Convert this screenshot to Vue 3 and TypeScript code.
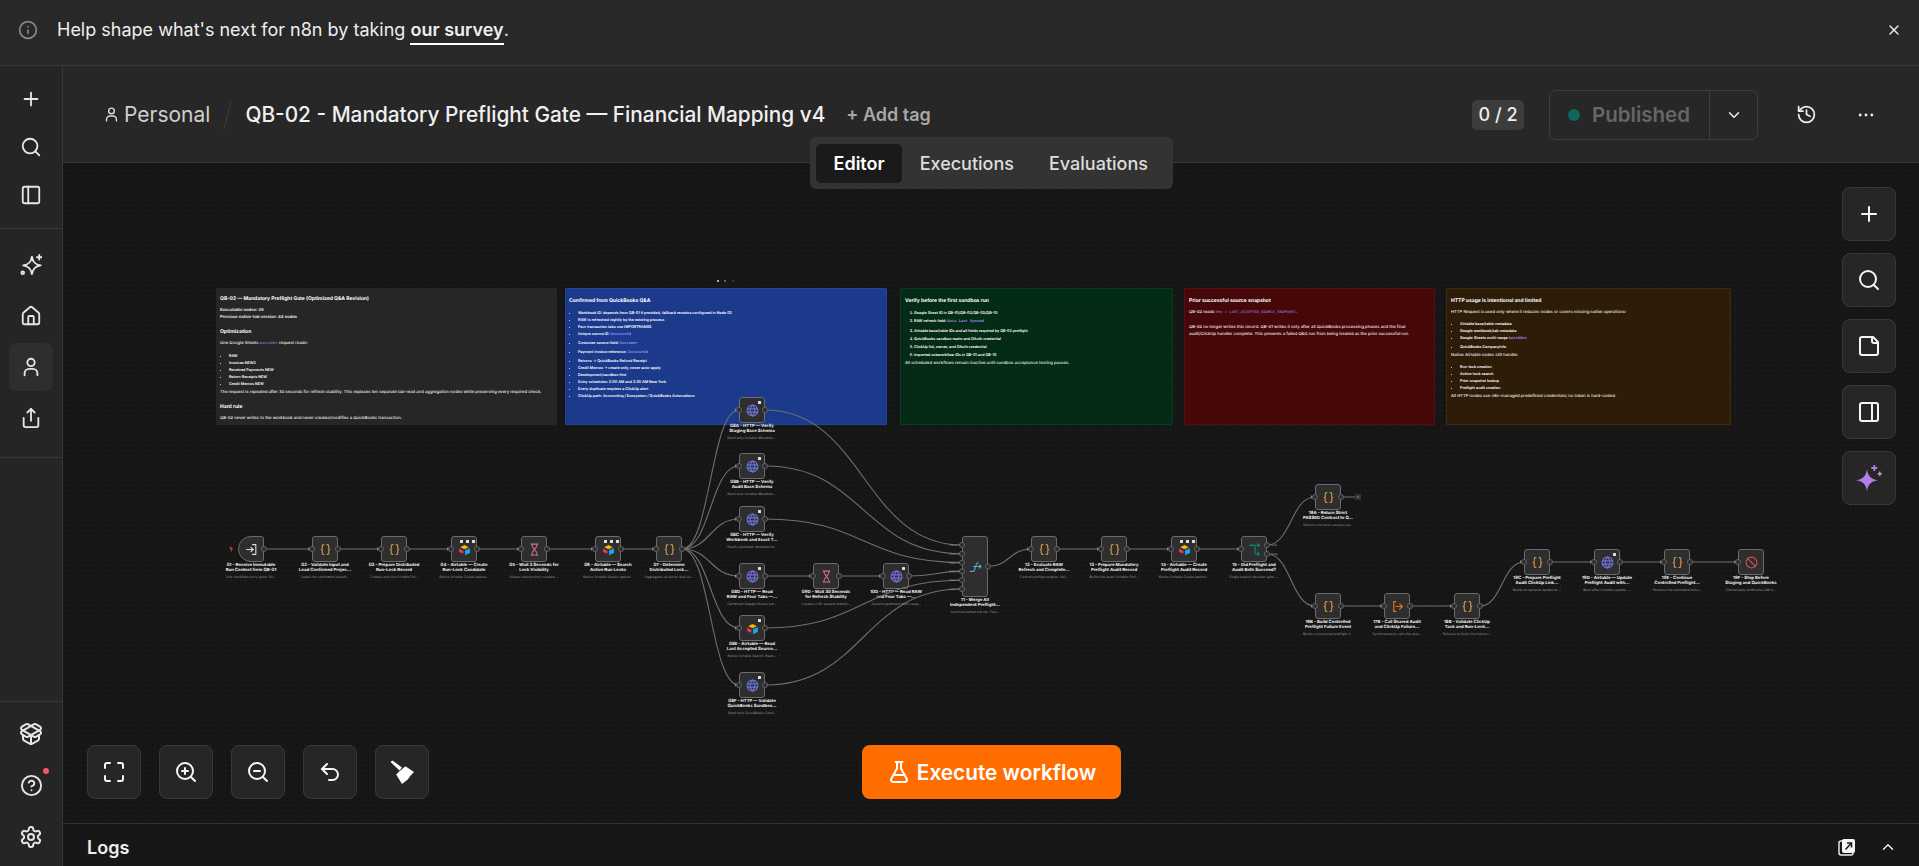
<template>
  <div class="app">
    <div class="banner">
      <Icon name="info" :size="20" class="banner-icon" />
      <span class="banner-text">Help shape what's next for n8n by taking <a class="survey">our survey</a>.</span>
      <Icon name="close" :size="16" class="banner-close" />
    </div>

    <div class="shell">
      <aside class="sidebar">
        <div class="side-group first">
          <button v-for="n in ['plus', 'search', 'panelLeft']" :key="n" class="side-btn"><Icon :name="n" :size="22" /></button>
        </div>
        <div class="side-group second">
          <button
            v-for="n in ['sparkles', 'house', 'user', 'share']"
            :key="n"
            class="side-btn"
            :class="{ active: n === 'user' }"
          >
            <Icon :name="n" :size="22" />
          </button>
        </div>
        <div class="side-spacer"></div>
        <div class="side-group third">
          <button class="side-btn"><Icon name="box" :size="24" /></button>
          <button class="side-btn help"><Icon name="help" :size="23" /><i class="red-dot"></i></button>
          <button class="side-btn"><Icon name="gear" :size="24" /></button>
        </div>
      </aside>

      <main class="main">
        <header class="header">
          <div class="crumb">
            <Icon name="user" :size="17" />
            <span class="crumb-name">Personal</span>
            <span class="slash"></span>
            <span class="wf-title">QB-02 - Mandatory Preflight Gate — Financial Mapping v4</span>
            <span class="add-tag">+ Add tag</span>
          </div>
          <div class="actions">
            <span class="counter">0 / 2</span>
            <div class="publish">
              <div class="publish-main"><i class="pub-dot"></i>Published</div>
              <div class="publish-caret"><Icon name="chevronDown" :size="18" /></div>
            </div>
            <Icon name="history" :size="21" class="history" />
            <Icon name="dots" :size="20" class="dots" />
          </div>
          <nav class="tabs">
            <span class="tab on">Editor</span>
            <span class="tab">Executions</span>
            <span class="tab">Evaluations</span>
          </nav>
        </header>

        <section class="canvas">
          <div class="note note-gray" :style="rect(216, 288, 341, 137)">
            <h4>QB-02 — Mandatory Preflight Gate (Optimized Q&amp;A Revision)</h4>
            <p class="strong">Executable nodes: 35<br />Previous native-tab version: 44 nodes</p>
            <h5>Optimization</h5>
            <p>One Google Sheets <code>batchGet</code> request reads:</p>
            <ul>
              <li>RAW</li>
              <li>Invoices NEW2</li>
              <li>Received Payments NEW</li>
              <li>Return Receipts NEW</li>
              <li>Credit Memos NEW</li>
            </ul>
            <p>The request is repeated after 30 seconds for refresh stability. This replaces ten separate tab-read and aggregation nodes while preserving every required check.</p>
            <h5>Hard rule</h5>
            <p>QB-02 never writes to the workbook and never creates/modifies a QuickBooks transaction.</p>
          </div>

          <div class="note note-blue" :style="rect(565, 288, 322, 137)">
            <h4>Confirmed from QuickBooks Q&amp;A</h4>
            <ul>
              <li>Workbook ID: depends from QB-01 if provided, fallback remains configured in Node 02</li>
              <li>RAW is refreshed nightly by the existing process</li>
              <li>Four transaction tabs use IMPORTRANGE</li>
              <li>Unique source ID: <code>InvoiceId</code></li>
              <li>Customer source field: <code>Customer</code></li>
              <li>Payment invoice reference: <code>InvoiceId</code></li>
              <li>Returns → QuickBooks Refund Receipt</li>
              <li>Credit Memos → create only, never auto-apply</li>
              <li>Development/sandbox first</li>
              <li>Entry schedules: 2:00 AM and 3:30 AM New York</li>
              <li>Every duplicate requires a ClickUp alert</li>
              <li>ClickUp path: Accounting / Ecosystem / QuickBooks Automations</li>
            </ul>
          </div>

          <div class="note note-green" :style="rect(900, 288, 273, 137)">
            <h4>Verify before the first sandbox run</h4>
            <ol>
              <li>Google Sheet ID in QB-01/QB-02/QB-03/QB-10</li>
              <li>RAW refresh field: <code>Data Last Synced</code></li>
              <li>Airtable base/table IDs and all fields required by QB-02 preflight</li>
              <li>QuickBooks sandbox realm and OAuth credential</li>
              <li>ClickUp list, owner, and OAuth credential</li>
              <li>Imported subworkflow IDs in QB-01 and QB-10</li>
            </ol>
            <p>All scheduled workflows remain inactive until sandbox acceptance testing passes.</p>
          </div>

          <div class="note note-red" :style="rect(1184, 288, 251, 137)">
            <h4>Prior successful source snapshot</h4>
            <p class="gap-b">QB-02 reads <code>Key = LAST_ACCEPTED_SOURCE_SNAPSHOT</code>.</p>
            <p>QB-02 no longer writes this record. QB-01 writes it only after all QuickBooks processing phases and the final audit/ClickUp handler complete. This prevents a failed Q&amp;O run from being treated as the prior successful run.</p>
          </div>

          <div class="note note-brown" :style="rect(1446, 288, 285, 137)">
            <h4>HTTP usage is intentional and limited</h4>
            <p>HTTP Request is used only where it reduces nodes or covers missing native operations:</p>
            <ul>
              <li>Airtable base/table metadata</li>
              <li>Google workbook/tab metadata</li>
              <li>Google Sheets multi-range <code>batchGet</code></li>
              <li>QuickBooks CompanyInfo</li>
            </ul>
            <p>Native Airtable nodes still handle:</p>
            <ul>
              <li>Run-lock creation</li>
              <li>Active-lock search</li>
              <li>Prior snapshot lookup</li>
              <li>Preflight audit creation</li>
            </ul>
            <p>All HTTP nodes use n8n-managed predefined credentials; no token is hard-coded.</p>
          </div>

          <div
            v-for="node in nodes"
            :key="node.id"
            class="node"
            :class="{ trigger: node.icon === 'trigger' }"
            :style="rect(node.x, node.y, node.w ?? 26, node.h ?? 26)"
          >
            <Icon :name="node.icon" :size="13" class="node-icon" :class="`ic-${node.icon}`" />
            <span v-if="node.badge" class="node-badge"></span>
            <span v-if="node.icon === 'airtable' && node.id !== '08E'" class="node-tools"><i></i><i></i><i></i></span>
            <span v-if="node.id === '08E'" class="node-badge"></span>
            <div class="node-label">
              <div class="node-title">{{ node.title[0] }}<br />{{ node.title[1] }}</div>
              <div class="node-desc">{{ node.desc }}</div>
            </div>
          </div>

          <svg class="edges" viewBox="63 163 1856 660" width="1856" height="660">
            <path v-for="(d, i) in edges" :key="i" :d="d" class="edge" />
            <path v-for="(p, i) in arrows" :key="`a${i}`" :d="`M${p[0] - 4} ${p[1] - 1.7}L${p[0] - 1.5} ${p[1]}L${p[0] - 4} ${p[1] + 1.7}Z`" class="arrow" />
            <circle v-for="(p, i) in ports" :key="`p${i}`" :cx="p[0]" :cy="p[1]" r="2.6" class="port" />
            <rect x="1355" y="494" width="6" height="6" rx="1" fill="#333" />
            <path d="M1357 497h2M1358 496v2" stroke="#999" stroke-width=".6" />
            <path d="M231 546.500l-1.200 2h2.400l-1.200 3" fill="none" stroke="#ea4b2a" stroke-width="1" />
            <circle cx="718" cy="281" r="1" fill="#ddd" />
            <circle cx="725" cy="281" r="1" fill="#777" />
            <circle cx="733" cy="281" r="1" fill="#444" />
            <text v-for="n in 6" :key="`in${n}`" :x="959" :y="545 + (n - 1) * 8.8 + 1" class="port-text" text-anchor="end">Input {{ n }}</text>
            <text x="1271" y="546" class="port-text">true</text>
            <text x="1271" y="555" class="port-text">false</text>
          </svg>

          <div class="tools left">
            <button v-for="n in ['maximize', 'zoomIn', 'zoomOut', 'undo', 'brush']" :key="n" class="tool"><Icon :name="n" :size="24" /></button>
          </div>
          <div class="tools right">
            <button class="tool"><Icon name="plus" :size="24" /></button>
            <button class="tool"><Icon name="search" :size="24" /></button>
            <button class="tool"><Icon name="note" :size="24" /></button>
            <button class="tool"><Icon name="panelRight" :size="24" /></button>
            <button class="tool">
              <svg width="30" height="30" viewBox="0 0 30 30">
                <path d="M13 6.300c1 6.600 3.600 9.700 11 11-7.400 1.300-10 4.400-11 11-1-6.600-3.600-9.700-11-11 7.400-1.300 10-4.400 11-11z" fill="#b07ee8" />
                <path d="M20.300 2v6M17.300 5h6" stroke="#b07ee8" stroke-width="1.800" />
                <path d="M25.700 8.500v4.400M23.500 10.700h4.400" stroke="#c58fc9" stroke-width="1.500" />
              </svg>
            </button>
          </div>
          <button class="execute"><Icon name="flask" :size="24" />Execute workflow</button>
        </section>

        <footer class="logs">
          <span class="logs-title">Logs</span>
          <div class="logs-actions">
            <svg width="20" height="20" viewBox="0 0 20 20">
              <rect x="2" y="4" width="14" height="14" rx="2" fill="none" stroke="#eee" stroke-width="1.400" />
              <rect x="5" y="2" width="13" height="14" rx="2" fill="#f5f5f5" />
              <path d="M8.500 12.500l5.500-6M10 6h4.500v4.500" stroke="#161616" stroke-width="1.500" fill="none" />
            </svg>
            <Icon name="chevronUp" :size="18" />
          </div>
        </footer>
      </main>
    </div>
  </div>
</template>

<script setup lang="ts">
import { h } from 'vue'

type FlowNode = {
  id: string
  x: number
  y: number
  w?: number
  h?: number
  icon: string
  title: [string, string]
  desc: string
  badge?: boolean
}

const originX = 63
const originY = 163

const strokeIcons: Record<string, string[]> = {
  info: ['M22 12a10 10 0 1 1-20 0a10 10 0 1 1 20 0', 'M12 16v-4', 'M12 8h.01'],
  close: ['M18 6 6 18', 'M6 6l12 12'],
  plus: ['M5 12h14', 'M12 5v14'],
  search: ['M19 11a8 8 0 1 1-16 0a8 8 0 1 1 16 0', 'M21 21l-4.300-4.300'],
  panelLeft: ['M5 3h14a2 2 0 0 1 2 2v14a2 2 0 0 1-2 2H5a2 2 0 0 1-2-2V5a2 2 0 0 1 2-2z', 'M9 3v18'],
  panelRight: ['M5 3h14a2 2 0 0 1 2 2v14a2 2 0 0 1-2 2H5a2 2 0 0 1-2-2V5a2 2 0 0 1 2-2z', 'M15 3v18'],
  sparkles: [
    'M13 3c1 6 3.500 8.500 9.500 9.500-6 1-8.500 3.500-9.500 9.500-1-6-3.500-8.500-9.500-9.500 6-1 8.500-3.500 9.500-9.500z',
    'M21 1v5',
    'M18.500 3.500h5',
    'M4.500 20.500a1.500 1.500 0 1 1-3 0a1.500 1.500 0 1 1 3 0'
  ],
  house: [
    'M15 21v-8a1 1 0 0 0-1-1h-4a1 1 0 0 0-1 1v8',
    'M3 10a2 2 0 0 1 .709-1.528l7-5.999a2 2 0 0 1 2.582 0l7 5.999A2 2 0 0 1 21 10v9a2 2 0 0 1-2 2H5a2 2 0 0 1-2-2z'
  ],
  user: ['M16 7a4 4 0 1 1-8 0a4 4 0 1 1 8 0', 'M5 21v-2a5 5 0 0 1 5-5h4a5 5 0 0 1 5 5v2'],
  share: ['M4 12v8a2 2 0 0 0 2 2h12a2 2 0 0 0 2-2v-8', 'M16 6l-4-4-4 4', 'M12 2v13'],
  box: [
    'M12 22v-9',
    'M15.170 2.210a1.670 1.670 0 0 1 1.630 0L21 4.570a1.930 1.930 0 0 1 0 3.360L8.820 14.790a1.655 1.655 0 0 1-1.640 0L3 12.430a1.930 1.930 0 0 1 0-3.360z',
    'M20 13v3.870a2.060 2.060 0 0 1-1.110 1.830l-6 3.080a1.930 1.930 0 0 1-1.780 0l-6-3.080A2.060 2.060 0 0 1 4 16.870V13',
    'M21 12.430a1.930 1.930 0 0 0 0-3.360L8.830 2.200a1.640 1.640 0 0 0-1.630 0L3 4.570a1.930 1.930 0 0 0 0 3.360l12.180 6.860a1.636 1.636 0 0 0 1.630 0z'
  ],
  help: ['M22 12a10 10 0 1 1-20 0a10 10 0 1 1 20 0', 'M9.090 9a3 3 0 0 1 5.830 1c0 2-3 3-3 3', 'M12 17h.01'],
  gear: [
    'M12.220 2h-.44a2 2 0 0 0-2 2v.18a2 2 0 0 1-1 1.730l-.43.25a2 2 0 0 1-2 0l-.15-.08a2 2 0 0 0-2.730.73l-.22.38a2 2 0 0 0 .73 2.730l.15.1a2 2 0 0 1 1 1.720v.51a2 2 0 0 1-1 1.740l-.15.09a2 2 0 0 0-.73 2.730l.22.38a2 2 0 0 0 2.730.73l.15-.08a2 2 0 0 1 2 0l.43.25a2 2 0 0 1 1 1.730V20a2 2 0 0 0 2 2h.44a2 2 0 0 0 2-2v-.18a2 2 0 0 1 1-1.730l.43-.25a2 2 0 0 1 2 0l.15.08a2 2 0 0 0 2.730-.73l.22-.39a2 2 0 0 0-.73-2.730l-.15-.08a2 2 0 0 1-1-1.740v-.5a2 2 0 0 1 1-1.740l.15-.09a2 2 0 0 0 .73-2.730l-.22-.38a2 2 0 0 0-2.730-.73l-.15.08a2 2 0 0 1-2 0l-.43-.25a2 2 0 0 1-1-1.730V4a2 2 0 0 0-2-2z',
    'M15 12a3 3 0 1 1-6 0a3 3 0 1 1 6 0'
  ],
  chevronDown: ['M6 9l6 6 6-6'],
  chevronUp: ['M6 15l6-6 6 6'],
  history: ['M3 12a9 9 0 1 0 9-9 9.750 9.750 0 0 0-6.740 2.740L3 8', 'M3 3v5h5', 'M12 7v5l4 2'],
  dots: ['M5 12h.01', 'M12 12h.01', 'M19 12h.01'],
  maximize: ['M8 3H5a2 2 0 0 0-2 2v3', 'M21 8V5a2 2 0 0 0-2-2h-3', 'M3 16v3a2 2 0 0 0 2 2h3', 'M16 21h3a2 2 0 0 0 2-2v-3'],
  zoomIn: ['M19 11a8 8 0 1 1-16 0a8 8 0 1 1 16 0', 'M21 21l-4.300-4.300', 'M11 8v6', 'M8 11h6'],
  zoomOut: ['M19 11a8 8 0 1 1-16 0a8 8 0 1 1 16 0', 'M21 21l-4.300-4.300', 'M8 11h6'],
  undo: ['M9 14 4 9l5-5', 'M4 9h10.500a5.500 5.500 0 0 1 0 11H11'],
  note: ['M16 3H5a2 2 0 0 0-2 2v14a2 2 0 0 0 2 2h14a2 2 0 0 0 2-2V8z', 'M15 3v4a2 2 0 0 0 2 2h4'],
  flask: [
    'M14 2v6a2 2 0 0 0 .245.96l5.510 10.080A2 2 0 0 1 18 22H6a2 2 0 0 1-1.755-2.960l5.510-10.080A2 2 0 0 0 10 8V2',
    'M6.453 15h11.094',
    'M8.500 2h7'
  ],
  code: [
    'M9 3H8a2 2 0 0 0-2 2v5c0 1.100-.9 2-2 2 1.100 0 2 .9 2 2v5a2 2 0 0 0 2 2h1',
    'M15 21h1a2 2 0 0 0 2-2v-5c0-1.100.9-2 2-2-1.100 0-2-.9-2-2V5a2 2 0 0 0-2-2h-1'
  ],
  globe: ['M22 12a10 10 0 1 1-20 0a10 10 0 1 1 20 0', 'M2.500 9h19', 'M2.500 15h19', 'M12 2c-6 6-6 14 0 20', 'M12 2c6 6 6 14 0 20'],
  wait: ['M6 2h12', 'M6 22h12', 'M7 2c0 6 3 7 5 10 2-3 5-4 5-10', 'M7 22c0-6 3-7 5-10 2 3 5 4 5 10'],
  merge: ['M2 21h5c2 0 3-1 3.500-3l3-10c.5-2 1.500-3 3.500-3', 'M8 12h14', 'M19 9l3 3-3 3'],
  branch: ['M3 4h7c2 0 3 1 3 3v10c0 2 1 3 3 3h5', 'M3 4h18', 'M18 1l3 3-3 3', 'M18 17l3 3-3 3'],
  trigger: ['M14 3h6v18h-6', 'M3 12h12', 'M11 8l4 4-4 4'],
  stop: ['M22 12a10 10 0 1 1-20 0a10 10 0 1 1 20 0', 'M5 5l14 14'],
  subflow: ['M9 3H5v18h4', 'M9 12h12', 'M16 7l5 5-5 5']
}

const fillIcons: Record<string, { d: string; fill: string }[]> = {
  airtable: [
    { d: 'M4 8l8-4.500 8 4.500-8 3.500z', fill: '#fcb400' },
    { d: 'M13 13.500l9-4v9l-9 4z', fill: '#18a8e8' },
    { d: 'M2 10.500l8 3.500v6l-8-3.500z', fill: '#e8346a' }
  ],
  brush: [
    { d: 'M.5 2l2-1.500 9.500 7-2.500 3z', fill: '#fff' },
    { d: 'M8.600 12l6.800-5.800 8.600 5.800-3.400 3.400-2.800 4.100-5.800 4.500-5.800-9.600z', fill: '#fff' }
  ]
}

const Icon = (props: { name: string; size?: number }) => {
  const size = props.size ?? 20
  const fills = fillIcons[props.name]
  const children = fills
    ? fills.map((p) => h('path', { d: p.d, fill: p.fill }))
    : (strokeIcons[props.name] ?? []).map((d) => h('path', { d }))
  return h(
    'svg',
    {
      width: size,
      height: size,
      viewBox: '0 0 24 24',
      fill: 'none',
      stroke: fills ? 'none' : 'currentColor',
      'stroke-width': 2,
      'stroke-linecap': 'round',
      'stroke-linejoin': 'round'
    },
    children
  )
}
Icon.props = ['name', 'size']

const nodes: FlowNode[] = [
  { id: '01', x: 238, y: 536, icon: 'trigger', title: ['01 - Receive Immutable', 'Run Context from QB-01'], desc: 'Sub-workflow entry point. Re...' },
  { id: '02', x: 312, y: 536, icon: 'code', title: ['02 - Validate Input and', 'Load Confirmed Projec...'], desc: 'Loads the confirmed shared...' },
  { id: '03', x: 381, y: 536, icon: 'code', title: ['03 - Prepare Distributed', 'Run-Lock Record'], desc: 'Creates only the Airtable Fal...' },
  { id: '04', x: 451, y: 536, icon: 'airtable', title: ['04 - Airtable — Create', 'Run-Lock Candidate'], desc: 'Native Airtable Create operat...' },
  { id: '05', x: 521, y: 536, icon: 'wait', title: ['05 - Wait 3 Seconds for', 'Lock Visibility'], desc: 'Allows concurrently created ...' },
  { id: '06', x: 595, y: 536, icon: 'airtable', title: ['06 - Airtable — Search', 'Active Run Locks'], desc: 'Native Airtable Search operat...' },
  { id: '07', x: 656, y: 536, icon: 'code', title: ['07 - Determine', 'Distributed Lock...'], desc: 'Aggregates all active lock ca...' },
  { id: '08A', x: 739, y: 397, icon: 'globe', badge: true, title: ['08A - HTTP — Verify', 'Staging Base Schema'], desc: 'Read-only Airtable Metadata ...' },
  { id: '08B', x: 739, y: 453, icon: 'globe', badge: true, title: ['08B - HTTP — Verify', 'Audit Base Schema'], desc: 'Read-only Airtable Metadata ...' },
  { id: '08C', x: 739, y: 506, icon: 'globe', badge: true, title: ['08C - HTTP — Verify', 'Workbook and Exact T...'], desc: 'Reads workbook metadata to...' },
  { id: '08D', x: 739, y: 563, icon: 'globe', badge: true, title: ['08D - HTTP — Read', 'RAW and Four Tabs —...'], desc: 'Optimized Google Sheets bat...' },
  { id: '09D', x: 813, y: 563, icon: 'wait', title: ['09D - Wait 30 Seconds', 'for Refresh Stability'], desc: 'Creates a 30-second stabiliz...' },
  { id: '10D', x: 883, y: 563, icon: 'globe', badge: true, title: ['10D - HTTP — Read RAW', 'and Four Tabs —...'], desc: 'Second optimized multi-rang...' },
  { id: '08E', x: 739, y: 615, icon: 'airtable', title: ['08E - Airtable — Read', 'Last Accepted Source...'], desc: 'Native Airtable Search. Read...' },
  { id: '08F', x: 739, y: 672, icon: 'globe', badge: true, title: ['08F - HTTP — Validate', 'QuickBooks Sandbox...'], desc: 'Read-only QuickBooks Sand...' },
  { id: '11', x: 962, y: 536, h: 61, icon: 'merge', title: ['11 - Merge All', 'Independent Preflight...'], desc: 'Synchronization barrier. Fast...' },
  { id: '12', x: 1031, y: 536, icon: 'code', title: ['12 - Evaluate RAW', 'Refresh and Complete...'], desc: 'Control preflight engine. Vali...' },
  { id: '13', x: 1101, y: 536, icon: 'code', title: ['13 - Prepare Mandatory', 'Preflight Audit Record'], desc: 'Builds the exact Airtable Pref...' },
  { id: '14', x: 1171, y: 536, icon: 'airtable', title: ['14 - Airtable — Create', 'Preflight Audit Record'], desc: 'Native Airtable Create operati...' },
  { id: '15', x: 1241, y: 536, icon: 'branch', title: ['15 - Did Preflight and', 'Audit Both Succeed?'], desc: 'Single explicit decision gate. ...' },
  { id: '16A', x: 1315, y: 484, icon: 'code', title: ['16A - Return Strict', 'PASSED Contract to Q...'], desc: 'Returns the strict success co...' },
  { id: '16B', x: 1315, y: 593, icon: 'code', title: ['16B - Build Controlled', 'Preflight Failure Event'], desc: 'Builds a structured preflight-f...' },
  { id: '17B', x: 1384, y: 593, icon: 'subflow', title: ['17B - Call Shared Audit', 'and ClickUp Failure...'], desc: 'Synchronously calls the shar...' },
  { id: '18B', x: 1454, y: 593, icon: 'code', title: ['18B - Validate ClickUp', 'Task and Run-Lock...'], desc: 'Refuses to finish the failure r...' },
  { id: '19C', x: 1524, y: 549, icon: 'code', title: ['19C - Prepare Preflight', 'Audit ClickUp Link...'], desc: 'Builds an optional update to ...' },
  { id: '19D', x: 1594, y: 549, icon: 'globe', badge: true, title: ['19D - Airtable — Update', 'Preflight Audit with...'], desc: 'Best-effort Airtable update. ...' },
  { id: '19E', x: 1664, y: 549, icon: 'code', title: ['19E - Continue', 'Controlled Preflight...'], desc: 'Restores the controlled failur...' },
  { id: '19F', x: 1738, y: 549, icon: 'stop', title: ['19F - Stop Before', 'Staging and QuickBooks'], desc: 'Deliberately terminates QB-0...' }
]

const byId = Object.fromEntries(nodes.map((n) => [n.id, n]))
const inPort = (id: string): [number, number] => [byId[id].x, byId[id].y + (byId[id].h ?? 26) / 2]
const outPort = (id: string): [number, number] => [byId[id].x + (byId[id].w ?? 26), byId[id].y + (byId[id].h ?? 26) / 2]

const curve = (a: [number, number], b: [number, number]) => {
  const dx = (b[0] - a[0]) * 0.5
  return `M${a[0]} ${a[1]}C${a[0] + dx} ${a[1]} ${b[0] - dx} ${b[1]} ${b[0]} ${b[1]}`
}

const mergeInputs: [number, number][] = [0, 1, 2, 3, 4, 5].map((i) => [962, 545 + i * 8.8])
const ifTrue: [number, number] = [1267, 545]
const ifFalse: [number, number] = [1267, 554]

const links: [[number, number], [number, number]][] = [
  [outPort('01'), inPort('02')],
  [outPort('02'), inPort('03')],
  [outPort('03'), inPort('04')],
  [outPort('04'), inPort('05')],
  [outPort('05'), inPort('06')],
  [outPort('06'), inPort('07')],
  [outPort('07'), inPort('08A')],
  [outPort('07'), inPort('08B')],
  [outPort('07'), inPort('08C')],
  [outPort('07'), inPort('08D')],
  [outPort('07'), inPort('08E')],
  [outPort('07'), inPort('08F')],
  [outPort('08D'), inPort('09D')],
  [outPort('09D'), inPort('10D')],
  [outPort('08A'), mergeInputs[0]],
  [outPort('08B'), mergeInputs[1]],
  [outPort('08C'), mergeInputs[2]],
  [outPort('10D'), mergeInputs[3]],
  [outPort('08E'), mergeInputs[4]],
  [outPort('08F'), mergeInputs[5]],
  [outPort('11'), inPort('12')],
  [outPort('12'), inPort('13')],
  [outPort('13'), inPort('14')],
  [outPort('14'), inPort('15')],
  [ifTrue, inPort('16A')],
  [ifFalse, inPort('16B')],
  [outPort('16A'), [1355, 497]],
  [outPort('16B'), inPort('17B')],
  [outPort('17B'), inPort('18B')],
  [outPort('18B'), inPort('19C')],
  [outPort('19C'), inPort('19D')],
  [outPort('19D'), inPort('19E')],
  [outPort('19E'), inPort('19F')]
]

const edges = links.map(([a, b]) => curve(a, b))
const arrows = nodes.filter((n) => n.id !== '01').map((n) => inPort(n.id)).filter((p) => p[0] !== 962)
const ports: [number, number][] = [
  ...nodes.filter((n) => n.id !== '01' && n.id !== '11').map((n) => inPort(n.id)),
  ...nodes.filter((n) => n.id !== '15' && n.id !== '19F').map((n) => outPort(n.id)),
  ...mergeInputs,
  ifTrue,
  ifFalse
]

const rect = (x: number, y: number, w: number, height: number) => ({
  left: `${x - originX}px`,
  top: `${y - originY}px`,
  width: `${w}px`,
  height: `${height}px`
})
</script>

<style scoped>
.app {
  width: 1919px;
  height: 866px;
  display: flex;
  flex-direction: column;
  background: #161616;
  color: #f2f2f2;
  font-family: Inter, 'Liberation Sans', sans-serif;
  overflow: hidden;
}
button {
  font-family: inherit;
  border: none;
  background: none;
  color: inherit;
  padding: 0;
}
.banner {
  height: 66px;
  flex: none;
  box-sizing: border-box;
  display: flex;
  align-items: center;
  padding: 0 16px 6px 18px;
  background: #282828;
  border-bottom: 1px solid #373737;
  font-size: 18px;
}
.banner-icon {
  color: #8a8a8a;
}
.banner-text {
  margin-left: 19px;
  color: #eee;
}
.survey {
  font-weight: 600;
  border-bottom: 2px solid #fff;
  padding-bottom: 3px;
}
.banner-close {
  margin-left: auto;
  color: #eee;
  margin-right: 1px;
}
.shell {
  flex: 1;
  display: flex;
  min-height: 0;
}
.sidebar {
  width: 63px;
  flex: none;
  box-sizing: border-box;
  background: #252525;
  border-right: 1px solid #373737;
  display: flex;
  flex-direction: column;
  align-items: stretch;
}
.side-group {
  display: flex;
  flex-direction: column;
  align-items: center;
}
.side-group.first {
  padding: 9px 0 9px;
  border-bottom: 1px solid #373737;
}
.side-group.second {
  padding: 12px 0 15px;
  gap: 3px;
  border-bottom: 1px solid #373737;
}
.side-group.third {
  border-top: 1px solid #373737;
  padding: 8px 0 5px;
  gap: 3.500px;
}
.side-spacer {
  flex: 1;
}
.side-btn {
  position: relative;
  width: 44px;
  height: 48px;
  border-radius: 6px;
  display: flex;
  align-items: center;
  justify-content: center;
  color: #e6e6e6;
}
.side-btn.active {
  background: #2e2e2e;
}
.red-dot {
  position: absolute;
  right: 4px;
  top: 6px;
  width: 6px;
  height: 6px;
  border-radius: 50%;
  background: #f2596a;
}
.main {
  flex: 1;
  min-width: 0;
  display: flex;
  flex-direction: column;
}
.header {
  position: relative;
  height: 97px;
  flex: none;
  box-sizing: border-box;
  background: #272727;
  border-bottom: 1px solid #373737;
  display: flex;
  align-items: center;
  justify-content: space-between;
  padding: 1px 46px 0 40px;
  z-index: 3;
}
.crumb {
  display: flex;
  align-items: center;
  color: #ddd;
}
.crumb-name {
  font-size: 21px;
  margin-left: 4px;
  color: #cfcfcf;
}
.slash {
  width: 1px;
  height: 28px;
  margin: 0 17px 0 17px;
  background: #3d3d3d;
  transform: rotate(14deg);
}
.wf-title {
  font-size: 20.800px;
  font-weight: 500;
  color: #f0f0f0;
}
.add-tag {
  margin-left: 21px;
  font-size: 18px;
  font-weight: 600;
  color: #a8a8a8;
}
.actions {
  display: flex;
  align-items: center;
  color: #eee;
}
.counter {
  width: 52px;
  height: 30px;
  display: flex;
  align-items: center;
  justify-content: center;
  border-radius: 5px;
  background: #3c3c3c;
  font-size: 18px;
  font-weight: 500;
}
.publish {
  margin-left: 25px;
  width: 209px;
  height: 50px;
  box-sizing: border-box;
  border: 1px solid #3d3d3d;
  border-radius: 7px;
  display: flex;
}
.publish-main {
  width: 160px;
  box-sizing: border-box;
  display: flex;
  align-items: center;
  padding-left: 18px;
  border-right: 1px solid #3d3d3d;
  font-size: 20.500px;
  font-weight: 600;
  color: #666;
}
.pub-dot {
  width: 12px;
  height: 12px;
  border-radius: 50%;
  background: #11655c;
  margin-right: 12px;
}
.publish-caret {
  flex: 1;
  display: flex;
  align-items: center;
  justify-content: center;
}
.history {
  margin-left: 38px;
}
.dots {
  margin-left: 39px;
  margin-right: -3px;
  stroke-width: 3.400;
}
.tabs {
  position: absolute;
  left: 747px;
  top: 71px;
  width: 363px;
  height: 52px;
  box-sizing: border-box;
  padding: 6px;
  background: #333;
  border-radius: 6px;
  display: flex;
  align-items: center;
  gap: 0;
}
.tab {
  padding: 0 17.500px;
  height: 39px;
  display: flex;
  align-items: center;
  font-size: 18px;
  font-weight: 500;
  color: #ddd;
  border-radius: 5px;
}
.tab.on {
  background: #1a1a1a;
  color: #fff;
  font-weight: 600;
}
.canvas {
  position: relative;
  flex: 1;
  min-height: 0;
  background-color: #161616;
  background-image: radial-gradient(#212121 0.6px, transparent 0.8px);
  background-size: 5px 5px;
  text-rendering: geometricPrecision;
}
.note {
  position: absolute;
  box-sizing: border-box;
  border-radius: 1px;
  overflow: hidden;
  padding: 9px 4px;
  font-size: 4.200px;
  line-height: 7px;
  font-weight: 500;
  color: #f2f2f2;
}
.note h4 {
  margin: 0 0 4px;
  font-size: 5px;
  font-weight: 700;
  line-height: 7px;
  color: #fff;
}
.note h5 {
  margin: 8px 0 4px;
  font-size: 5px;
  font-weight: 700;
  line-height: 7px;
  color: #fff;
}
.note p {
  margin: 0 0 4px;
}
.note p.strong {
  font-weight: 600;
}
.note p.gap-b {
  margin-bottom: 7px;
}
.note ul,
.note ol {
  margin: 0 0 2px;
  padding-left: 9px;
  font-size: 3.700px;
  line-height: 7px;
  font-weight: 600;
  color: #fff;
}
.note ol li {
  margin-bottom: 1px;
}
.note code {
  font-family: 'Liberation Mono', monospace;
  font-size: 3.800px;
  color: #a78bf0;
}
.note-gray {
  background: #262626;
  padding-top: 8px;
}
.note-blue {
  background: #1b3a8c;
  border: 1px solid #21439c;
  padding-left: 3px;
}
.note-blue code {
  color: #9e8ff5;
}
.note-green {
  background: #032b15;
  border: 1px solid #0a3a20;
}
.note-red {
  background: #460709;
  border: 1px solid #5a0c10;
}
.note-brown {
  background: #2d1c08;
  border: 1px solid #3d2a10;
}
.node {
  position: absolute;
  box-sizing: border-box;
  background: #2e2e2e;
  border: 1px solid #6b6b6b;
  border-radius: 3px;
  display: flex;
  align-items: center;
  justify-content: center;
}
.node.trigger {
  border-radius: 13px 3px 3px 13px;
}
.ic-code {
  color: #d69a50;
}
.ic-globe {
  color: #6f74e0;
}
.ic-wait {
  color: #d0708a;
}
.ic-merge {
  color: #5ba5cf;
}
.ic-branch {
  color: #0d8a72;
}
.ic-trigger {
  color: #ddd;
}
.ic-stop {
  color: #d9534f;
}
.ic-subflow {
  color: #e0761e;
}
.node-badge {
  position: absolute;
  right: 3px;
  top: 3px;
  width: 3px;
  height: 3px;
  background: #ddd;
  border-radius: 0.5px;
}
.node-tools {
  position: absolute;
  top: 3px;
  left: 8px;
  display: flex;
  gap: 3px;
}
.node-tools i {
  width: 3px;
  height: 3px;
  background: #ddd;
}
.node-label {
  position: absolute;
  left: 50%;
  top: calc(100% + 1.500px);
  width: 72px;
  transform: translateX(-50%);
  text-align: center;
  white-space: nowrap;
}
.node-title {
  font-size: 4.300px;
  line-height: 5px;
  font-weight: 700;
  color: #f2f2f2;
}
.node-desc {
  margin-top: 2px;
  font-size: 3.400px;
  line-height: 5px;
  color: #8f8f8f;
}
.edges {
  position: absolute;
  left: 0;
  top: 0;
  pointer-events: none;
}
.edge {
  fill: none;
  stroke: #6f6f6f;
  stroke-width: 1.100;
}
.arrow {
  fill: #888;
}
.port {
  fill: #2e2e2e;
  stroke: #6b6b6b;
  stroke-width: 0.8;
}
.port-text {
  font-size: 3px;
  fill: #999;
}
.tools {
  position: absolute;
  display: flex;
}
.tools.left {
  left: 24px;
  top: 582px;
  gap: 18px;
}
.tools.right {
  right: 23px;
  top: 24px;
  flex-direction: column;
  gap: 12px;
}
.tool {
  width: 54px;
  height: 54px;
  box-sizing: border-box;
  border: 1px solid #383838;
  border-radius: 8px;
  background: #262626;
  color: #f5f5f5;
  display: flex;
  align-items: center;
  justify-content: center;
}
.execute {
  position: absolute;
  left: 799px;
  top: 582px;
  width: 259px;
  height: 54px;
  border-radius: 8px;
  background: #ff6d00;
  color: #fff;
  font-size: 20.800px;
  font-weight: 600;
  display: flex;
  align-items: center;
  justify-content: center;
  gap: 6px;
}
.logs {
  height: 43px;
  flex: none;
  box-sizing: border-box;
  border-top: 1px solid #333;
  background: #171717;
  display: flex;
  align-items: center;
  justify-content: space-between;
  padding: 4px 22px 0 24px;
}
.logs-title {
  font-size: 18px;
  font-weight: 600;
  color: #eee;
}
.logs-actions {
  display: flex;
  align-items: center;
  gap: 22px;
  color: #eee;
}
</style>
